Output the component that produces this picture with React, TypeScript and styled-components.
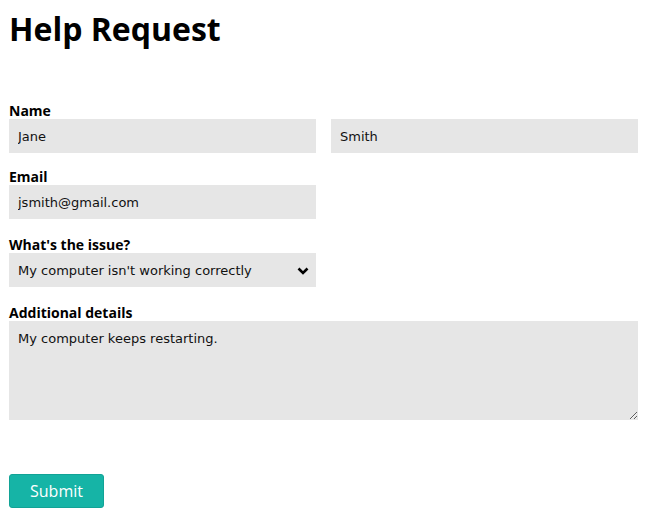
import React, { FC } from "react";
import styled, { createGlobalStyle } from "styled-components";

const GlobalStyle = createGlobalStyle`
  html, body {
    margin: 0;
    padding: 0;
    background: #ffffff;
  }
  body {
    font-family: "Open Sans", sans-serif;
    color: #000000;
  }
`;

const App: FC = () => {
  return (
    <>
      <GlobalStyle />
      <Wrapper>
        <Title>Help Request</Title>
        <Form onSubmit={(e) => e.preventDefault()}>
          <Group $gap={12}>
            <Label>Name</Label>
            <Row>
              <Field type="text" defaultValue="Jane" />
              <Field type="text" defaultValue="Smith" />
            </Row>
          </Group>
          <Group>
            <Label>Email</Label>
            <Row>
              <Field type="email" defaultValue="jsmith@gmail.com" />
            </Row>
          </Group>
          <Group>
            <Label>What's the issue?</Label>
            <Row>
              <SelectBox>
                <Select defaultValue="broken">
                  <option value="broken">My computer isn't working correctly</option>
                  <option value="other">Something else</option>
                </Select>
                <Chevron width="12" height="8" viewBox="0 0 12 8">
                  <path
                    d="M1.5 1.5 L6 6 L10.5 1.5"
                    fill="none"
                    stroke="#000"
                    strokeWidth="2.6"
                  />
                </Chevron>
              </SelectBox>
            </Row>
          </Group>
          <Group>
            <Label>Additional details</Label>
            <Details defaultValue="My computer keeps restarting." />
          </Group>
          <SubmitButton type="submit">Submit</SubmitButton>
        </Form>
      </Wrapper>
    </>
  );
};

const Wrapper = styled.main`
  width: 629px;
  padding: 7px 10px 0 9px;
`;

const Title = styled.h1`
  margin: 0;
  font-family: "Open Sans", sans-serif;
  font-size: 32px;
  font-weight: 700;
  line-height: 44px;
`;

const Form = styled.form`
  display: flex;
  flex-direction: column;
  margin-top: 48px;
`;

const Group = styled.div<{ $gap?: number }>`
  display: flex;
  flex-direction: column;
  margin-bottom: ${(p) => (p.$gap !== undefined ? p.$gap : 14)}px;
`;

const Label = styled.label`
  padding-top: 3px;
  font-family: "Open Sans", sans-serif;
  font-size: 14px;
  font-weight: 700;
  line-height: 17px;
  color: #000;
`;

const Row = styled.div`
  display: grid;
  grid-template-columns: 307px 307px;
  column-gap: 15px;
`;

const fieldBase = `
  box-sizing: border-box;
  height: 34px;
  width: 100%;
  border: none;
  outline: none;
  margin: 0;
  padding: 0 9px;
  background: #e6e6e6;
  font-family: "DejaVu Sans", Verdana, sans-serif;
  font-size: 13px;
  color: #111;
`;

const Field = styled.input`
  ${fieldBase}
`;

const SelectBox = styled.div`
  position: relative;
  width: 307px;
`;

const Select = styled.select`
  ${fieldBase}
  appearance: none;
  -webkit-appearance: none;
  border-radius: 0;
`;

const Chevron = styled.svg`
  position: absolute;
  right: 7px;
  top: 14px;
  pointer-events: none;
`;

const Details = styled.textarea`
  ${fieldBase}
  height: 99px;
  padding: 10px 9px;
  resize: vertical;
`;

const SubmitButton = styled.button`
  align-self: flex-start;
  margin-top: 40px;
  width: 95px;
  height: 34px;
  border: 1px solid #12a396;
  border-radius: 3px;
  background: #16b4a6;
  color: #ffffff;
  font-family: "Open Sans", sans-serif;
  font-size: 16px;
  cursor: pointer;
`;

export default App;
